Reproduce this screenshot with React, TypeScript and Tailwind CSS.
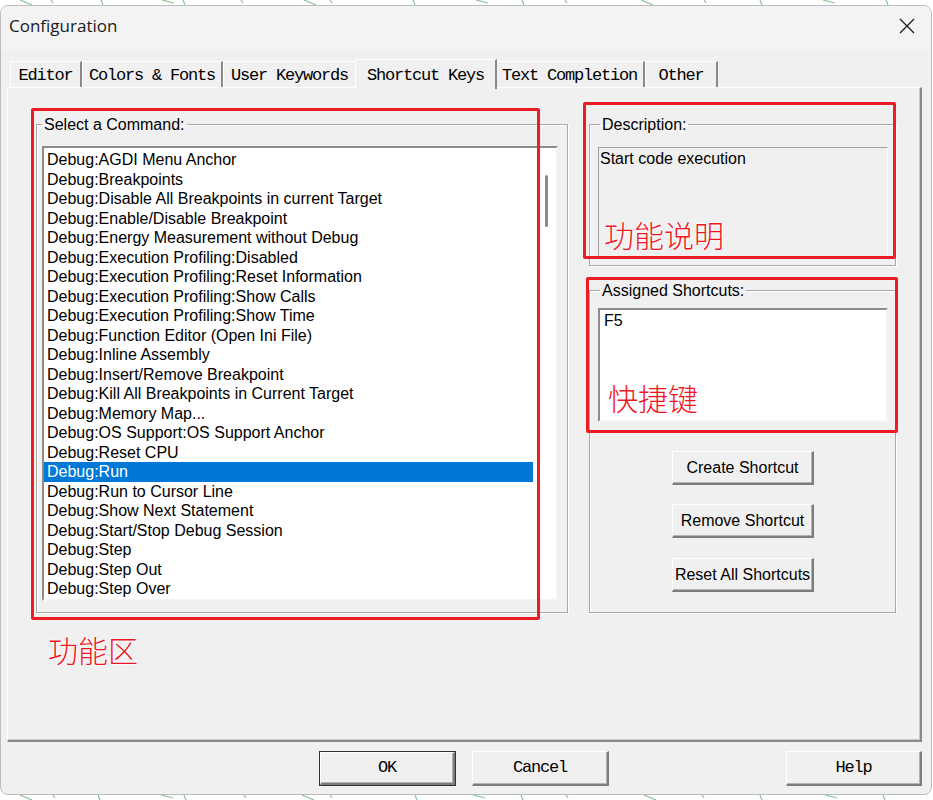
import React from "react";

const commands = [
  "Debug:AGDI Menu Anchor",
  "Debug:Breakpoints",
  "Debug:Disable All Breakpoints in current Target",
  "Debug:Enable/Disable Breakpoint",
  "Debug:Energy Measurement without Debug",
  "Debug:Execution Profiling:Disabled",
  "Debug:Execution Profiling:Reset Information",
  "Debug:Execution Profiling:Show Calls",
  "Debug:Execution Profiling:Show Time",
  "Debug:Function Editor (Open Ini File)",
  "Debug:Inline Assembly",
  "Debug:Insert/Remove Breakpoint",
  "Debug:Kill All Breakpoints in Current Target",
  "Debug:Memory Map...",
  "Debug:OS Support:OS Support Anchor",
  "Debug:Reset CPU",
  "Debug:Run",
  "Debug:Run to Cursor Line",
  "Debug:Show Next Statement",
  "Debug:Start/Stop Debug Session",
  "Debug:Step",
  "Debug:Step Out",
  "Debug:Step Over",
];

const tabs = [
  { label: "Editor", w: "w-[72px]" },
  { label: "Colors & Fonts", w: "w-[141px]" },
  { label: "User Keywords", w: "w-[134px]" },
  { label: "Shortcut Keys", w: "w-[142px]", active: true },
  { label: "Text Completion", w: "w-[150px]" },
  { label: "Other", w: "w-[73px]" },
];

function WinButton({ children, className = "" }: { children: React.ReactNode; className?: string }) {
  return (
    <div
      className={`flex items-center justify-center bg-[#f0f0f0] border-t border-l border-white border-r-2 border-b-2 border-r-[#7c7c7c] border-b-[#7c7c7c] shadow-[inset_-1px_-1px_0_#b4b4b4] ${className}`}
    >
      {children}
    </div>
  );
}

function RedLabel({ text, className }: { text: string; className: string }) {
  return (
    <div
      className={`absolute font-['Noto_Sans_CJK_SC',sans-serif] font-light text-[30px] leading-none text-[#f0141e] [text-shadow:0_0_2px_#fff,0_0_2px_#fff,0_0_3px_#fff] ${className}`}
    >
      {text}
    </div>
  );
}

function GreenStrokes({ seed }: { seed: number }) {
  const xs = [20, 48, 95, 160, 178, 240, 300, 330, 410, 470, 520, 560, 640, 700, 760, 820, 880];
  return (
    <svg width="933" height="5" viewBox="0 0 933 5" className="block">
      {xs.map((x, i) => (
        <path
          key={x}
          d={`M${x + ((i * seed) % 7)} 0 L${x + ((i * seed) % 7) + (i % 3 === 0 ? 12 : 2)} ${i % 2 === 0 ? 5 : 3}`}
          stroke="#3a9a4a"
          strokeWidth="1.2"
          opacity="0.6"
          fill="none"
        />
      ))}
    </svg>
  );
}

export default function App() {
  return (
    <div className="relative w-[933px] h-[800px] bg-white overflow-hidden font-['Liberation_Sans',Arial,sans-serif] text-black">
      {/* background remnants above window */}
      <div className="h-[5px] overflow-hidden">
        <GreenStrokes seed={3} />
      </div>

      {/* window */}
      <div className="relative z-10 w-[932px] h-[790px] flex flex-col rounded-[8px] border border-[#bcbcbc] bg-[#f0f0f0] overflow-hidden">
        {/* title bar */}
        <div className="h-[44px] shrink-0 bg-[#f3f3f3] flex items-center justify-between pl-[8px] pr-[16px]">
          <span className="font-['Open_Sans',sans-serif] text-[17px] text-[#1a1a1a] -mt-[4px]">Configuration</span>
          <svg width="16" height="16" viewBox="0 0 16 16" className="-mt-[4px]">
            <path d="M1 1L15 15M15 1L1 15" stroke="#1a1a1a" strokeWidth="1.3" fill="none" />
          </svg>
        </div>

        {/* tab row */}
        <div className="flex items-end pl-[9px] pt-[8px] h-[37px] shrink-0 relative z-10">
          {tabs.map((t) =>
            t.active ? (
              <div
                key={t.label}
                className={`${t.w} -mx-[2px] h-[30px] -mb-[2px] relative z-10 bg-[#f0f0f0] border-t border-l border-white border-r-2 border-r-[#8a8a8a] flex items-start justify-center pt-[3px] font-['Liberation_Mono',monospace] text-[17px] tracking-[-1.2px] text-black`}
              >
                {t.label}
              </div>
            ) : (
              <div
                key={t.label}
                className={`${t.w} h-[26px] bg-[#f0f0f0] border-t border-l border-white border-r-2 border-r-[#8a8a8a] flex items-center justify-center pt-[2px] font-['Liberation_Mono',monospace] text-[17px] tracking-[-1.2px] text-black`}
              >
                {t.label}
              </div>
            )
          )}
        </div>

        {/* tab panel */}
        <div className="ml-[6px] w-[915px] h-[655px] shrink-0 border-t border-l border-white border-r-2 border-b-2 border-r-[#8a8a8a] border-b-[#8a8a8a] shadow-[inset_-1px_-1px_0_#c8c8c8] flex pl-[28px] pt-[27px] text-[16px]">
          {/* left: select a command */}
          <fieldset className="w-[532px] h-[498px] border border-[#a8a8a8] shadow-[inset_1px_1px_0_#fff,1px_1px_0_#fff]">
            <legend className="ml-[5px] px-[2px] leading-[19px]">Select a Command:</legend>
            <div className="ml-[5px] mt-[12px] w-[516px] h-[455px] bg-white border-2 border-t-[#8c8c8c] border-l-[#8c8c8c] border-r-[#f4f4f4] border-b-[#f4f4f4] flex overflow-hidden">
              <div className="w-[489px] pt-[2px]">
                {commands.map((c) => (
                  <div
                    key={c}
                    className={`h-[19.5px] leading-[19.5px] pl-[3px] whitespace-nowrap ${
                      c === "Debug:Run" ? "bg-[#0078d7] text-white" : ""
                    }`}
                  >
                    {c}
                  </div>
                ))}
              </div>
              <div className="flex-1">
                <div className="ml-[12px] mt-[27px] w-[3px] h-[52px] rounded-full bg-[#8a8a8a]" />
              </div>
            </div>
          </fieldset>

          {/* right column */}
          <div className="ml-[21px] w-[307px] flex flex-col">
            <fieldset className="h-[151px] border border-[#a8a8a8] shadow-[inset_1px_1px_0_#fff,1px_1px_0_#fff]">
              <legend className="ml-[10px] px-[2px] leading-[19px]">Description:</legend>
              <div className="ml-[8px] mt-[13px] w-[290px] h-[110px] border border-t-[#a0a0a0] border-l-[#a0a0a0] border-r-white border-b-white pl-[1px] pt-[1px] leading-[19px]">
                Start code execution
              </div>
            </fieldset>

            <fieldset className="mt-[15px] h-[332px] border border-[#a8a8a8] shadow-[inset_1px_1px_0_#fff,1px_1px_0_#fff] flex flex-col">
              <legend className="ml-[10px] px-[2px] leading-[19px]">Assigned Shortcuts:</legend>
              <div className="ml-[8px] mt-[8px] w-[290px] h-[114px] bg-white border-2 border-t-[#8c8c8c] border-l-[#8c8c8c] border-r-[#f4f4f4] border-b-[#f4f4f4] pl-[4px] pt-[1px] leading-[19px]">
                F5
              </div>
              <div className="flex flex-col items-center pl-[1px]">
                <WinButton className="mt-[29px] w-[142px] h-[34px]">Create Shortcut</WinButton>
                <WinButton className="mt-[19px] w-[142px] h-[34px]">Remove Shortcut</WinButton>
                <WinButton className="mt-[20px] w-[142px] h-[34px]">Reset All Shortcuts</WinButton>
              </div>
            </fieldset>
          </div>
        </div>

        {/* bottom buttons */}
        <div className="flex mt-[9px] font-['Liberation_Mono',monospace] text-[17px] tracking-[-1.2px] text-black">
          <div className="ml-[318px] w-[137px] h-[35px] border border-[#333] flex">
            <WinButton className="flex-1">OK</WinButton>
          </div>
          <WinButton className="ml-[16px] w-[137px] h-[35px]">Cancel</WinButton>
          <WinButton className="ml-[177px] w-[136px] h-[35px]">Help</WinButton>
        </div>
      </div>

      {/* background remnants below window */}
      <div className="h-[5px] overflow-hidden">
        <GreenStrokes seed={5} />
      </div>

      {/* red annotations */}
      <div className="absolute z-20 left-[31px] top-[108px] w-[509px] h-[512px] border-[3px] border-[#ec1c24] rounded-[2px]" />
      <div className="absolute z-20 left-[583px] top-[102px] w-[313px] h-[157px] border-[3px] border-[#ec1c24] rounded-[2px]" />
      <div className="absolute z-20 left-[586px] top-[277px] w-[312px] h-[156px] border-[3px] border-[#ec1c24] rounded-[2px]" />
      <RedLabel text="功能说明" className="z-20 left-[604px] top-[219px]" />
      <RedLabel text="快捷键" className="z-20 left-[608px] top-[382px]" />
      <RedLabel text="功能区" className="z-20 left-[48px] top-[634px]" />
    </div>
  );
}
